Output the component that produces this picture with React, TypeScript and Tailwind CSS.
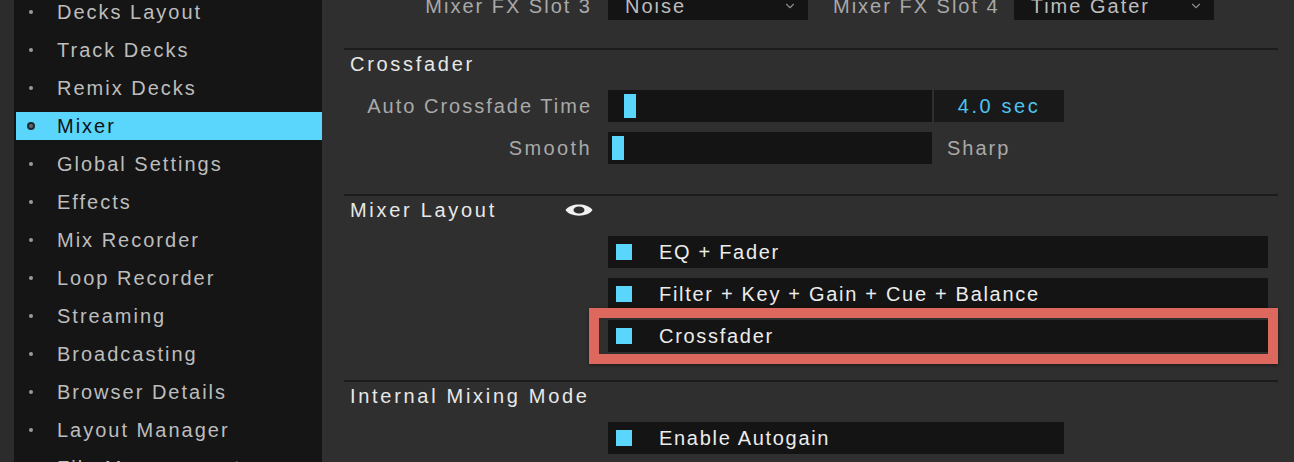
import { ChevronDown } from "lucide-react"

const navItems = [
  "Decks Layout",
  "Track Decks",
  "Remix Decks",
  "Mixer",
  "Global Settings",
  "Effects",
  "Mix Recorder",
  "Loop Recorder",
  "Streaming",
  "Broadcasting",
  "Browser Details",
  "Layout Manager",
  "File Management",
]

function Eye() {
  return (
    <svg width="28" height="14" viewBox="0 0 28 14">
      <path d="M0.5 7 C5 -0.5 23 -0.5 27.5 7 C23 14.5 5 14.5 0.5 7 Z" fill="#f2f2f2" />
      <ellipse cx="14" cy="7" rx="5.5" ry="3.6" fill="#2f2f2f" />
    </svg>
  )
}

function Divider({ className }: { className: string }) {
  return <div className={`h-[2px] bg-[#1c1c1c] ${className}`} />
}

function Header({ children }: { children: React.ReactNode }) {
  return (
    <div className="flex h-[28px] items-center pl-[6px] text-[20px] tracking-[2.7px] text-[#e8e8e8]">
      {children}
    </div>
  )
}

function Checkbox({ label, wide = true }: { label: string; wide?: boolean }) {
  return (
    <div
      className={`flex h-[32px] items-center bg-[#141414] ${wide ? "w-[660px]" : "w-[456px]"}`}
    >
      <div className="ml-[8px] h-[16px] w-[16px] bg-[#5ad6fd]" />
      <span className="ml-[27px] text-[20px] tracking-[1.7px] text-[#ececec]">{label}</span>
    </div>
  )
}

export default function App() {
  return (
    <div className="flex h-[462px] w-[1294px] overflow-hidden bg-[#2f2f2f] font-['Liberation_Sans',Arial,sans-serif] antialiased">
      <div className="w-[14px] shrink-0 bg-[#2c2c2c]" />
      <div className="w-[308px] shrink-0 bg-[#151515]">
        <div className="mt-[-7px]">
          {navItems.map((item) => {
            const active = item === "Mixer"
            return (
              <div key={item} className="flex h-[38px] items-center">
                <div
                  className={`ml-[2px] flex h-[28px] flex-1 items-center ${
                    active ? "bg-[#5ad6fd]" : ""
                  }`}
                >
                  <div className="ml-[11px] flex w-[8px] justify-center">
                    {active ? (
                      <div className="h-[8px] w-[8px] rounded-full border-[2px] border-[#1e2a2e] bg-[#5b6a70]" />
                    ) : (
                      <div className="h-[4px] w-[4px] rounded-full bg-[#9a9a9a]" />
                    )}
                  </div>
                  <span
                    className={`ml-[22px] text-[20px] tracking-[2px] ${
                      active ? "text-[#121212]" : "text-[#bdbdbd]"
                    }`}
                  >
                    {item}
                  </span>
                </div>
              </div>
            )
          })}
        </div>
      </div>

      <div className="flex flex-1 flex-col pl-[22px] pr-[16px]">
        {/* FX slots */}
        <div className="mt-[-8px] flex h-[28px] items-center">
          <div className="w-[248px] text-right text-[20px] tracking-[2px] text-[#a9a9a9]">
            Mixer FX Slot 3
          </div>
          <div className="ml-[16px] flex h-[28px] w-[200px] items-center justify-between bg-[#141414] pl-[17px] pr-[11px]">
            <span className="text-[20px] tracking-[2px] text-[#bdbdbd]">Noise</span>
            <ChevronDown size={14} strokeWidth={2} className="text-[#8a8a8a]" />
          </div>
          <div className="ml-[25px] text-[20px] tracking-[2px] text-[#a9a9a9]">Mixer FX Slot 4</div>
          <div className="ml-[14px] flex h-[28px] w-[200px] items-center justify-between bg-[#141414] pl-[17px] pr-[11px]">
            <span className="text-[20px] tracking-[2px] text-[#bdbdbd]">Time Gater</span>
            <ChevronDown size={14} strokeWidth={2} className="text-[#8a8a8a]" />
          </div>
        </div>

        <Divider className="mt-[28px]" />
        <Header>Crossfader</Header>

        <div className="mt-[12px] flex h-[32px] items-center">
          <div className="w-[248px] text-right text-[20px] tracking-[2px] text-[#a9a9a9]">
            Auto Crossfade Time
          </div>
          <div className="ml-[16px] flex h-[32px] w-[324px] items-center bg-[#141414] pl-[16px]">
            <div className="h-[24px] w-[12px] bg-[#5ad6fd]" />
          </div>
          <div className="ml-[2px] flex h-[32px] w-[130px] items-center justify-center bg-[#191919] text-[20px] tracking-[2.6px] text-[#4cc4ef]">
            4.0 sec
          </div>
        </div>

        <div className="mt-[10px] flex h-[32px] items-center">
          <div className="w-[248px] text-right text-[20px] tracking-[2.4px] text-[#a9a9a9]">
            Smooth
          </div>
          <div className="ml-[16px] flex h-[32px] w-[324px] items-center bg-[#141414] pl-[4px]">
            <div className="h-[24px] w-[12px] bg-[#5ad6fd]" />
          </div>
          <span className="ml-[15px] text-[20px] tracking-[2px] text-[#a9a9a9]">Sharp</span>
        </div>

        <Divider className="mt-[30px]" />
        <div className="flex items-center">
          <Header>Mixer Layout</Header>
          <div className="ml-[68px] flex items-center">
            <Eye />
          </div>
        </div>

        <div className="ml-[264px] mt-[12px] flex flex-col gap-[10px]">
          <Checkbox label="EQ + Fader" />
          <Checkbox label="Filter + Key + Gain + Cue + Balance" />
          <div className="relative w-[660px]">
            <Checkbox label="Crossfader" />
            <div className="absolute bottom-[-12px] left-[-19px] right-[-10px] top-[-12px] border-[10px] border-[#dd685d] shadow-[0_1px_3px_rgba(0,0,0,0.5)]" />
          </div>
        </div>

        <Divider className="mt-[28px]" />
        <Header>Internal Mixing Mode</Header>

        <div className="ml-[264px] mt-[12px]">
          <Checkbox label="Enable Autogain" wide={false} />
        </div>
      </div>
    </div>
  )
}
